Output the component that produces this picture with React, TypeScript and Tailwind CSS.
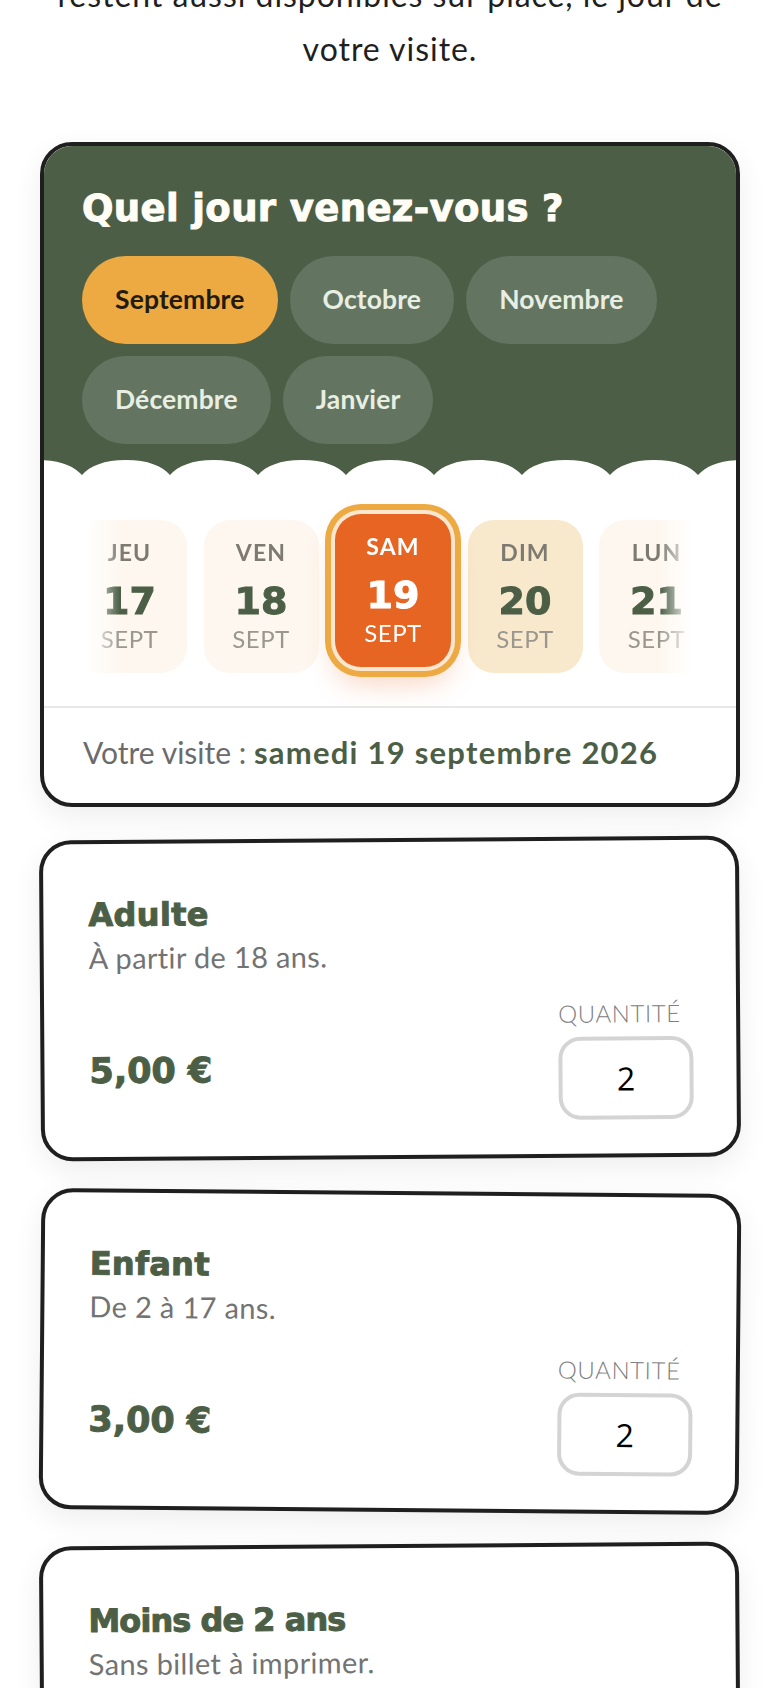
const display = "font-['DejaVu_Sans',sans-serif] font-bold [-webkit-text-stroke:1px_currentColor]";
const body = "font-['Lato',sans-serif]";

const months = ["Septembre", "Octobre", "Novembre", "Décembre", "Janvier"];

const days = [
  { name: "JEU", num: "17" },
  { name: "VEN", num: "18" },
  { name: "SAM", num: "19", selected: true },
  { name: "DIM", num: "20", near: true },
  { name: "LUN", num: "21" },
];

const tickets = [
  { name: "Adulte", desc: "À partir de 18 ans.", price: "5,00 €", tilt: "-rotate-[0.4deg]" },
  { name: "Enfant", desc: "De 2 à 17 ans.", price: "3,00 €", tilt: "rotate-[0.5deg]" },
  { name: "Moins de 2 ans", desc: "Sans billet à imprimer.", tilt: "-rotate-[0.4deg]", tight: true },
];

function Scallops() {
  // arcs repeat every 88px, the first cusp sits 38px in from the card edge
  const arcs = Array.from({ length: 9 }, (_, i) => {
    const x = -50 + i * 88;
    return `M${x} 15 C${x + 8} 6 ${x + 22} 0 ${x + 44} 0 C${x + 66} 0 ${x + 80} 6 ${x + 88} 15 Z`;
  });
  return (
    <svg viewBox="0 0 692 15" className="block w-full h-[15px]" preserveAspectRatio="none">
      <path d={arcs.join(" ")} fill="#ffffff" />
    </svg>
  );
}

function DayCard({ name, num, selected, near }: { name: string; num: string; selected?: boolean; near?: boolean }) {
  if (selected) {
    return (
      <div className="shrink-0 w-[116px] h-[153px] rounded-[26px] bg-[#e66522] text-white flex flex-col items-center -translate-y-[6px] shadow-[0_0_0_4px_#fbe6cf,0_0_0_10px_#eeaa42,0_16px_28px_rgba(230,101,34,0.28)]">
        <span className={`${body} mt-[17px] text-[23px] leading-[30px] font-bold tracking-[0.05em]`}>{name}</span>
        <span className={`${display} mt-[11px] text-[38px] leading-[46px]`}>{num}</span>
        <span className={`${body} text-[24px] leading-[30px] tracking-[0.02em]`}>SEPT</span>
      </div>
    );
  }
  return (
    <div className={`shrink-0 w-[115px] h-[153px] rounded-[26px] flex flex-col items-center ${near ? "bg-[#f8e9cd]" : "bg-[#fdf7ef]"}`}>
      <span className={`${body} mt-[17px] text-[23px] leading-[30px] font-bold tracking-[0.05em] text-[#7d7a72]`}>{name}</span>
      <span className={`${display} mt-[11px] text-[38px] leading-[46px] text-[#4c5f46]`}>{num}</span>
      <span className={`${body} text-[24px] leading-[30px] tracking-[0.02em] text-[#9a978f]`}>SEPT</span>
    </div>
  );
}

function TicketCard({ name, desc, price, tilt, tight }: { name: string; desc: string; price?: string; tilt: string; tight?: boolean }) {
  return (
    <div className={`h-[321px] rounded-[32px] border-[4px] border-[#1f1f1f] bg-white pl-[45px] pr-[43px] pt-[51px] shadow-[0_10px_30px_rgba(0,0,0,0.07)] ${tilt}`}>
      <h3 className={`${display} text-[32px] leading-[40px] text-[#4c5f46] ${tight ? "tracking-[-0.03em]" : "tracking-[0.01em]"}`}>{name}</h3>
      <p className={`${body} mt-[3px] text-[29px] leading-[40px] tracking-[0.012em] text-[#737373]`}>{desc}</p>
      {price && (
        <div className="flex items-end justify-between mt-[23px]">
          <span className={`${display} text-[35px] leading-[44px] text-[#4c5f46] mb-[30px]`}>{price}</span>
          <div className="flex flex-col w-[135px]">
            <span className={`${body} text-[24px] leading-[32px] tracking-[0.025em] font-light text-[#808080]`}>QUANTITÉ</span>
            <div className="mt-[7px] h-[83px] rounded-[22px] border-[4px] border-[#d4d4d4] flex items-center justify-center font-['Open_Sans',sans-serif] text-[32px] text-black">
              2
            </div>
          </div>
        </div>
      )}
    </div>
  );
}

export default function App() {
  return (
    <div className="h-[1688px] overflow-hidden bg-white">
      <div className="px-[40px]">
        <p className={`${body} -mt-[32px] text-center text-[32px] leading-[54px] tracking-[0.03em] text-[#1f1f1f]`}>
          restent aussi disponibles sur place, le jour de
          <br />
          votre visite.
        </p>

        {/* Calendrier */}
        <section className="mt-[66px] h-[665px] rounded-[32px] border-[4px] border-[#1f1f1f] bg-white overflow-hidden shadow-[0_10px_30px_rgba(0,0,0,0.07)]">
          <div className="bg-[#4c5f46]">
            <div className="pl-[38px] pr-[30px] pt-[39px] pb-[16px]">
              <h2 className={`${display} text-[37px] leading-[48px] text-[#fffdf6] tracking-[0.01em]`}>
                Quel jour venez-vous ?
              </h2>
              <div className="mt-[23px] flex flex-wrap gap-[12px]">
                {months.map((m, i) => (
                  <span
                    key={m}
                    className={`${body} h-[88px] px-[33px] rounded-[44px] flex items-center text-[26.5px] tracking-[0.005em] font-bold ${
                      i === 0 ? "bg-[#edaa43] text-[#241a10]" : "bg-[#637561] text-[#e8efe2]"
                    }`}
                  >
                    {m}
                  </span>
                ))}
              </div>
            </div>
            <Scallops />
          </div>

          <div className="ml-[42px] mr-[36px] pt-[45px] pb-[33px] flex justify-center overflow-hidden [mask-image:linear-gradient(to_right,transparent,black_34px,black_calc(100%-40px),transparent_calc(100%-8px))]">
            <div className="flex gap-[16.5px] shrink-0">
              {days.map((d) => (
                <DayCard key={d.name} {...d} />
              ))}
            </div>
          </div>

          <div className="border-t-2 border-[#e8e8e6] pl-[39px] pt-[22px]">
            <p className={`${body} text-[30px] leading-[44px] text-[#6b6b6b]`}>
              Votre visite : <strong className="font-bold text-[31px] tracking-[0.04em] text-[#4c5f46]">samedi 19 septembre 2026</strong>
            </p>
          </div>
        </section>

        {/* Billets */}
        <div className="mt-[31px] flex flex-col gap-[32px]">
          {tickets.map((t) => (
            <TicketCard key={t.name} {...t} />
          ))}
        </div>
      </div>
    </div>
  );
}
